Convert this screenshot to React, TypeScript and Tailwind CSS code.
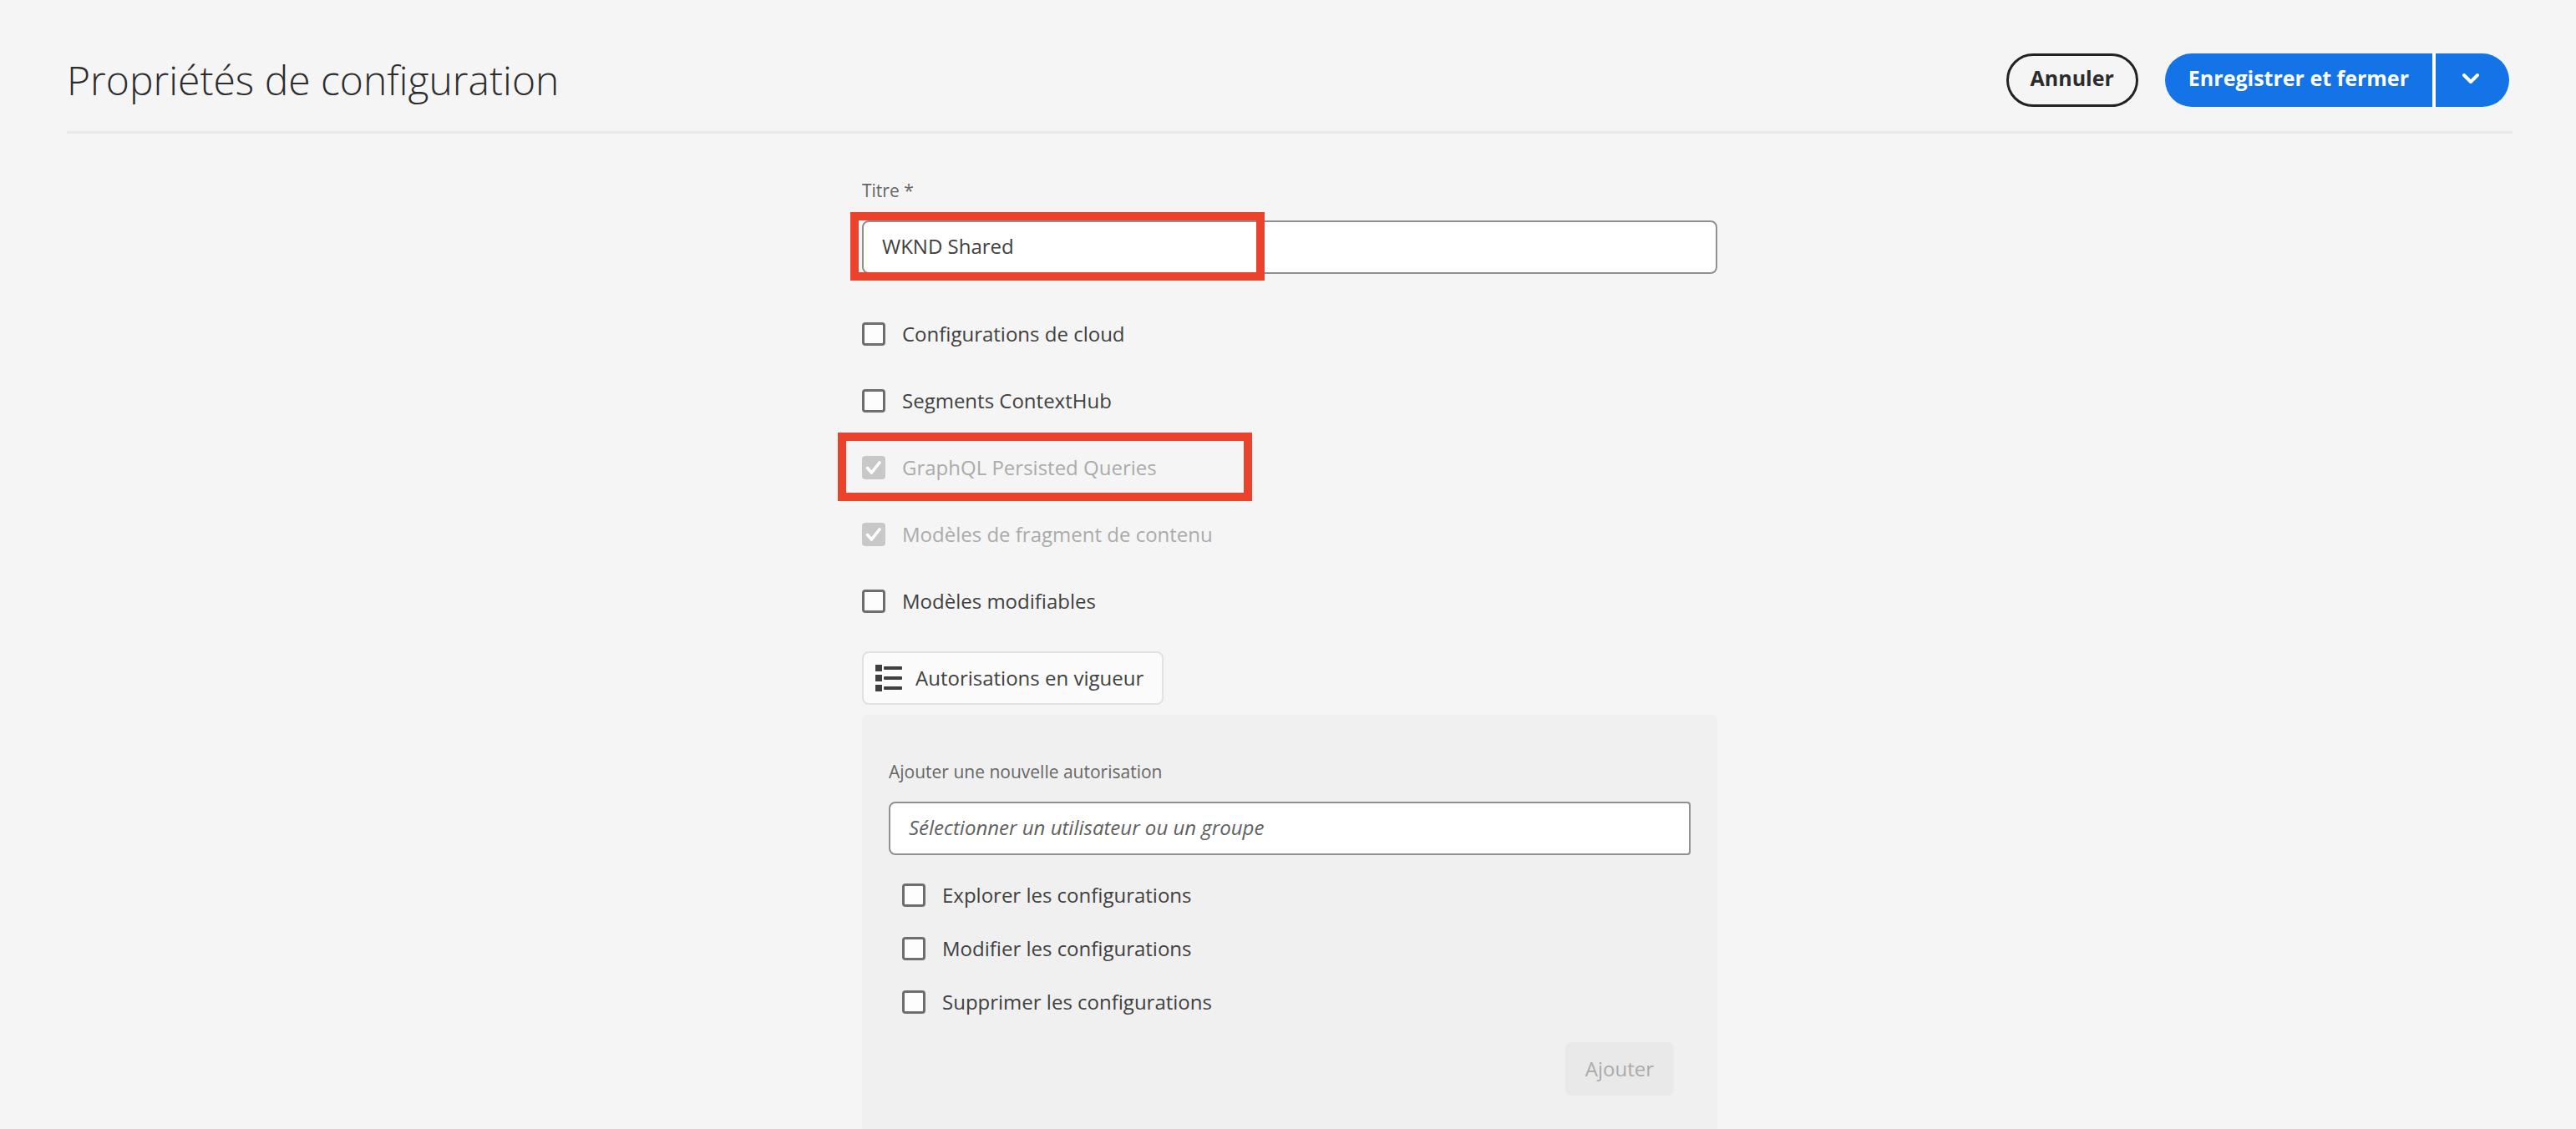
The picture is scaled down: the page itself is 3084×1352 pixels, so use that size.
import { useState } from "react";

const checkboxClass =
  "size-7 shrink-0 appearance-none rounded-sm border-[3px] border-[#6e6e6e] bg-[#fdfdfd] checked:border-[#6e6e6e] checked:bg-[#6e6e6e] disabled:border-[#c8c8c8] disabled:bg-[#c8c8c8]";

type CheckItem = { id: string; label: string; locked?: boolean; highlighted?: boolean };

const features: CheckItem[] = [
  { id: "cloud", label: "Configurations de cloud" },
  { id: "segments", label: "Segments ContextHub" },
  { id: "graphql", label: "GraphQL Persisted Queries", locked: true, highlighted: true },
  { id: "fragments", label: "Modèles de fragment de contenu", locked: true },
  { id: "templates", label: "Modèles modifiables" },
];

const permissions: CheckItem[] = [
  { id: "browse", label: "Explorer les configurations" },
  { id: "edit", label: "Modifier les configurations" },
  { id: "delete", label: "Supprimer les configurations" },
];

function CheckboxRow({ item, rowClass }: { item: CheckItem; rowClass: string }) {
  const [checked, setChecked] = useState(Boolean(item.locked));
  return (
    <div className={`relative flex items-center ${rowClass}`}>
      <label
        className={`flex items-center gap-5 text-2xl ${item.locked ? "text-[#ababab]" : "text-[#404040]"}`}
      >
        <span className="relative flex">
          <input
            type="checkbox"
            id={item.id}
            checked={checked}
            disabled={item.locked}
            onChange={(e) => setChecked(e.target.checked)}
            className={checkboxClass}
          />
          {checked && (
            <svg viewBox="0 0 28 28" className="pointer-events-none absolute inset-0 size-7" fill="none">
              <path d="M6.5 14.5 11.5 20 21 8" stroke="#fff" strokeWidth="3.6" strokeLinecap="round" strokeLinejoin="round" />
            </svg>
          )}
        </span>
        {item.label}
      </label>
      {item.highlighted && (
        <div className="pointer-events-none absolute -left-[29px] -top-0.5 h-[82px] w-[496px] border-10 border-[#ec412b]" />
      )}
    </div>
  );
}

function ListIcon() {
  return (
    <svg viewBox="0 0 32 32" className="size-8" fill="#404040">
      <rect x="0" y="0" width="8" height="8" />
      <rect x="10" y="2" width="22" height="4" rx="1" />
      <rect x="0" y="12" width="8" height="8" />
      <rect x="10" y="14" width="22" height="4" rx="1" />
      <rect x="0" y="24" width="8" height="8" />
      <rect x="10" y="26" width="22" height="4" rx="1" />
    </svg>
  );
}

export default function App() {
  const [title, setTitle] = useState("WKND Shared");
  const [principal, setPrincipal] = useState("");

  return (
    <div className="min-h-screen bg-[#f5f5f5] pl-20 pr-[76px] font-['Open_Sans',sans-serif] text-[#404040]">
      <header className="flex items-center justify-between border-b-3 border-[#e8e8e8] pt-16 pb-[29px]">
        <h1 className="text-5xl leading-16 font-light text-[#2c2c2c]">Propriétés de configuration</h1>
        <div className="flex items-center gap-8 pr-1 text-[25px] font-bold">
          <button type="button" className="h-16 rounded-full border-[3px] border-[#222] px-[26px] pb-1 text-[#2c2c2c]">
            Annuler
          </button>
          <div className="flex gap-1 rounded-full bg-white">
            <button type="button" className="h-16 rounded-l-full bg-[#1473e6] px-7 pb-1 text-white">
              Enregistrer et fermer
            </button>
            <button
              type="button"
              aria-label="Plus d’options"
              className="flex h-16 w-22 items-center justify-center rounded-r-full bg-[#1473e6] pr-1 pb-1"
            >
              <svg viewBox="0 0 22 14" className="h-3.5 w-[22px]" fill="none">
                <path d="M3 3 11 11 19 3" stroke="#fff" strokeWidth="4" strokeLinecap="round" strokeLinejoin="round" />
              </svg>
            </button>
          </div>
        </div>
      </header>

      <main className="mx-auto w-full max-w-5xl pt-13">
        <label htmlFor="title" className="block text-[21px] leading-8 text-[#666]">
          Titre *
        </label>
        <div className="relative mt-5">
          <input
            id="title"
            type="text"
            value={title}
            onChange={(e) => setTitle(e.target.value)}
            className="block h-16 w-full rounded-lg border-2 border-[#909090] bg-white px-[22px] pb-1 text-2xl outline-none"
          />
          <div className="pointer-events-none absolute -left-3.5 -top-2.5 h-[82px] w-[496px] border-10 border-[#ec412b]" />
        </div>

        <div className="mt-8">
          {features.map((item) => (
            <CheckboxRow key={item.id} item={item} rowClass="h-20" />
          ))}
        </div>

        <button
          type="button"
          className="mt-5 flex h-16 items-center gap-4 rounded-lg border-2 border-[#e1e1e1] bg-[#fbfbfb] pr-[22px] pl-3.5 text-2xl"
        >
          <ListIcon />
          Autorisations en vigueur
        </button>

        <section className="mt-3 rounded-t-lg bg-[#f0f0f0] px-8 pt-13 pb-10">
          <label htmlFor="principal" className="block text-[21px] leading-8 text-[#666]">
            Ajouter une nouvelle autorisation
          </label>
          <input
            id="principal"
            type="text"
            value={principal}
            onChange={(e) => setPrincipal(e.target.value)}
            placeholder="Sélectionner un utilisateur ou un groupe"
            className="mt-5 block h-16 w-full rounded-l-lg rounded-r-sm border-2 border-[#909090] bg-white px-[22px] pb-1 text-2xl outline-none placeholder:text-[#606060] placeholder:italic"
          />
          <div className="mt-4 pl-4">
            {permissions.map((item) => (
              <CheckboxRow key={item.id} item={item} rowClass="h-16" />
            ))}
          </div>
          <div className="mt-4 flex justify-end pr-5">
            <button type="button" disabled className="h-16 rounded-lg bg-[#e9e9e9] px-6 text-2xl text-[#ababab]">
              Ajouter
            </button>
          </div>
        </section>
      </main>
    </div>
  );
}
